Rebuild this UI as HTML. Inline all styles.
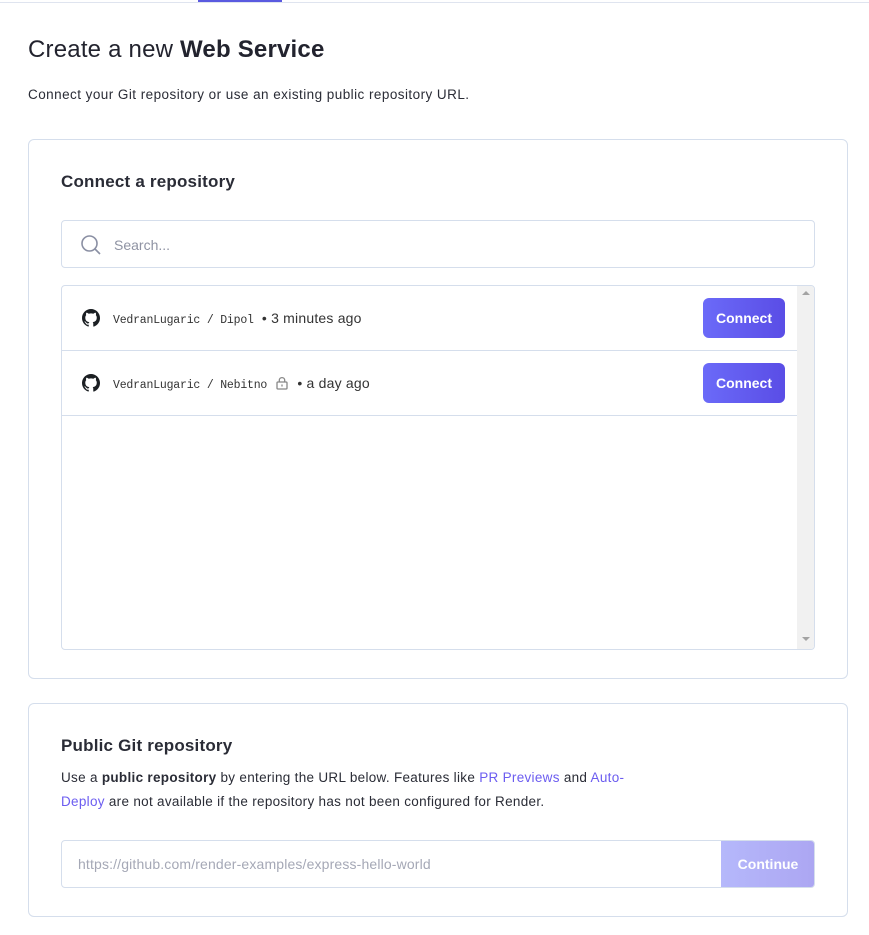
<!DOCTYPE html>
<html><head><meta charset="utf-8"><style>
*{box-sizing:border-box;margin:0;padding:0}
body{width:869px;height:935px;background:#fff;font-family:"Liberation Sans",sans-serif;color:#1f2230;position:relative;overflow:hidden}
.abs{position:absolute}
.card{position:absolute;left:28px;width:820px;border:1px solid #d5deec;border-radius:6px;background:#fff}
h2{font-size:17px;font-weight:600;color:#2a2c36}
.btn{position:absolute;left:641px;width:82px;height:40px;border-radius:6px;background:linear-gradient(90deg,#6b6af8,#5a4de6);color:#fff;font-weight:bold;font-size:14px;text-align:center;line-height:40px}
.row{position:absolute;left:0;width:735px;height:65px;border-bottom:1px solid #d5deec}
.mono{font-family:"Liberation Mono",monospace;font-size:11.5px;color:#333;letter-spacing:-0.2px}
.rt{position:absolute;left:51px;top:24px;font-size:14px;color:#333;white-space:nowrap;letter-spacing:0.2px}
a{color:#6b5cf0;text-decoration:none}
</style></head><body>
<div class="abs" style="left:0;top:2px;width:869px;height:1px;background:#dfe4ef"></div>
<div class="abs" style="left:198px;top:0;width:84px;height:2px;background:#5a5ae0"></div>
<div class="abs" style="left:28px;top:36px;font-size:24px;color:#22232e;white-space:nowrap;letter-spacing:0.2px">Create a new <b style="font-weight:600">Web Service</b></div>
<div class="abs" style="left:28px;top:87px;font-size:13.5px;color:#2a2c36;letter-spacing:0.45px;white-space:nowrap">Connect your Git repository or use an existing public repository URL.</div>

<div class="card" style="top:139px;height:540px">
 <h2 class="abs" style="left:32px;top:32px;letter-spacing:0.2px">Connect a repository</h2>
 <div class="abs" style="left:32px;top:80px;width:754px;height:48px;border:1px solid #d5deec;border-radius:4px">
  <svg class="abs" style="left:18px;top:13px" width="22" height="22" viewBox="0 0 22 22"><circle cx="9.5" cy="9.5" r="7.5" fill="none" stroke="#8a8fa3" stroke-width="1.6"/><path d="M15 15l5 5" stroke="#8a8fa3" stroke-width="1.6"/></svg>
  <div class="abs" style="left:52px;top:16px;font-size:14px;color:#8f93a3">Search...</div>
 </div>
 <div class="abs" style="left:32px;top:145px;width:754px;height:365px;border:1px solid #d5deec;border-radius:4px;overflow:hidden">
  <div class="row" style="top:0">
   <svg class="abs" style="left:20px;top:23px" width="18" height="18" viewBox="0 0 16 16"><path fill="#1b1f23" d="M8 0C3.58 0 0 3.58 0 8c0 3.54 2.29 6.530 5.47 7.59.4.07.55-.17.55-.38v-1.33c-2.23.48-2.7-1.07-2.7-1.07-.36-.92-.89-1.17-.89-1.17-.73-.5.05-.49.05-.49.8.06 1.23.83 1.23.83.71 1.23 1.88.87 2.34.66.07-.52.28-.87.51-1.07-1.78-.2-3.64-.89-3.64-3.95 0-.87.31-1.59.82-2.15-.08-.2-.36-1.02.08-2.12 0 0 .67-.21 2.2.82a7.6 7.6 0 014 0c1.53-1.04 2.2-.82 2.2-.82.44 1.1.16 1.92.08 2.12.51.56.82 1.27.82 2.15 0 3.07-1.87 3.75-3.65 3.95.29.25.54.73.54 1.48v2.2c0 .21.15.46.55.38A8 8 0 0016 8c0-4.42-3.58-8-8-8z"/></svg>
   <div class="rt"><span class="mono">VedranLugaric / Dipol</span> &nbsp;• 3 minutes ago</div>
   <div class="btn" style="top:12px">Connect</div>
  </div>
  <div class="row" style="top:65px">
   <svg class="abs" style="left:20px;top:23px" width="18" height="18" viewBox="0 0 16 16"><path fill="#1b1f23" d="M8 0C3.58 0 0 3.58 0 8c0 3.54 2.29 6.53 5.47 7.59.4.07.55-.17.55-.38v-1.33c-2.23.48-2.7-1.07-2.7-1.07-.36-.92-.89-1.17-.89-1.17-.73-.5.05-.49.05-.49.8.06 1.23.83 1.23.83.71 1.23 1.88.87 2.34.66.07-.52.28-.87.51-1.07-1.78-.2-3.64-.89-3.64-3.95 0-.87.31-1.59.82-2.15-.08-.2-.36-1.02.08-2.12 0 0 .67-.21 2.2.82a7.6 7.6 0 014 0c1.53-1.04 2.2-.82 2.2-.82.44 1.1.16 1.92.08 2.12.51.56.82 1.27.82 2.150 0 3.07-1.87 3.75-3.65 3.95.29.25.54.73.54 1.48v2.2c0 .21.15.46.55.38A8 8 0 0016 8c0-4.42-3.58-8-8-8z"/></svg>
   <div class="rt"><span class="mono">VedranLugaric / Nebitno</span> <svg width="14" height="14" viewBox="0 0 14 14" style="vertical-align:-2px;margin:0 4px"><rect x="2" y="6" width="10" height="7" rx="1" fill="none" stroke="#888" stroke-width="1.3"/><path d="M4.3 6V4.3a2.7 2.7 0 015.4 0V6" fill="none" stroke="#888" stroke-width="1.3"/><path d="M7 8.5v2" stroke="#888" stroke-width="1.3"/></svg> • a day ago</div>
   <div class="btn" style="top:12px">Connect</div>
  </div>
  <div class="abs" style="left:735px;top:0;width:18px;height:365px;background:#f1f1f1">
   <div class="abs" style="left:5px;top:5px;border:4px solid transparent;border-bottom:4px solid #a3a3a3;border-top:0"></div>
   <div class="abs" style="left:5px;top:351px;border:4px solid transparent;border-top:4px solid #a3a3a3;border-bottom:0"></div>
  </div>
 </div>
</div>

<div class="card" style="top:703px;height:214px">
 <h2 class="abs" style="left:32px;top:32px;letter-spacing:0.2px">Public Git repository</h2>
 <div class="abs" style="left:32px;top:62px;width:640px;font-size:13.5px;line-height:24px;color:#2a2c36;letter-spacing:0.3px">Use a <b style="font-weight:600">public repository</b> by entering the URL below. Features like <a>PR Previews</a> and <a>Auto-<br>Deploy</a> are not available if the repository has not been configured for Render.</div>
 <div class="abs" style="left:32px;top:136px;width:754px;height:48px;border:1px solid #d5deec;border-radius:4px;overflow:hidden">
  <div class="abs" style="left:16px;top:15px;font-size:14px;color:#a5a8b6;letter-spacing:0.15px">https://github.com/render-examples/express-hello-world</div>
  <div class="abs" style="left:659px;top:-1px;width:94px;height:48px;background:linear-gradient(90deg,#b5b8fb,#aca6f2);color:#fff;font-weight:bold;font-size:14px;text-align:center;line-height:48px">Continue</div>
 </div>
</div>
</body></html>
